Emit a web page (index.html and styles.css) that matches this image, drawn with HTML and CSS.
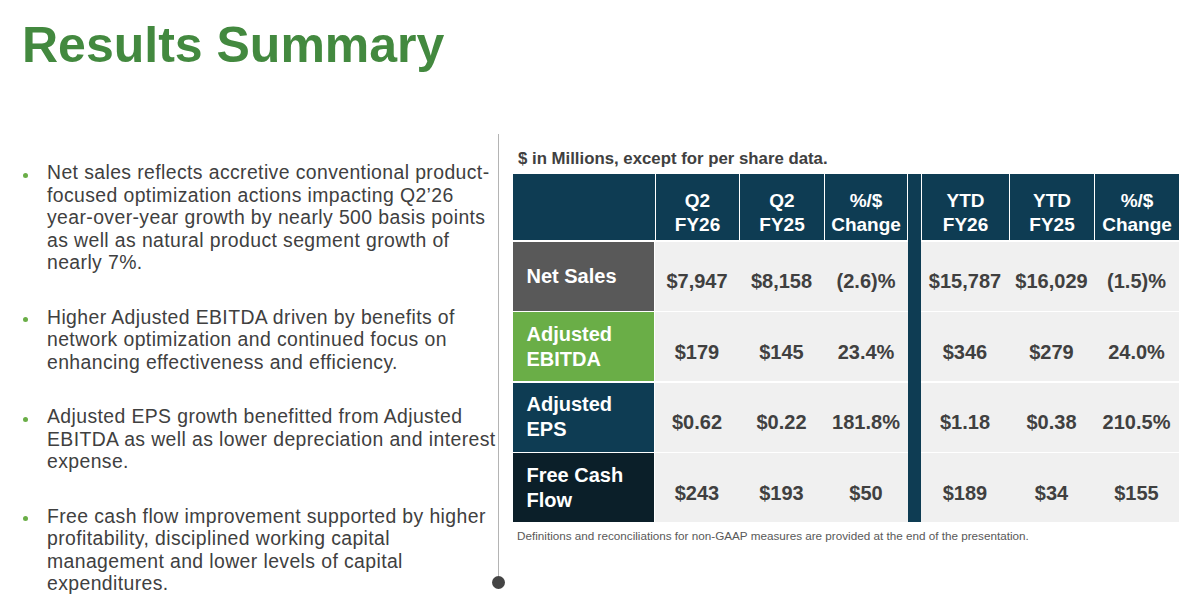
FILE: index.html
```html
<!DOCTYPE html>
<html lang="en">
<head>
<meta charset="utf-8">
<title>Results Summary</title>
<link rel="stylesheet" href="styles.css">
</head>
<body>
<div class="slide">
  <h1 class="title">Results Summary</h1>
  <div class="main">
    <ul class="points">
      <li class="point"><span class="dot"></span><p>Net sales reflects accretive conventional product-<br>focused optimization actions impacting Q2’26<br>year-over-year growth by nearly 500 basis points<br>as well as natural product segment growth of<br>nearly 7%.</p></li>
      <li class="point"><span class="dot"></span><p>Higher Adjusted EBITDA driven by benefits of<br>network optimization and continued focus on<br>enhancing effectiveness and efficiency.</p></li>
      <li class="point"><span class="dot"></span><p>Adjusted EPS growth benefitted from Adjusted<br>EBITDA as well as lower depreciation and interest<br>expense.</p></li>
      <li class="point"><span class="dot"></span><p>Free cash flow improvement supported by higher<br>profitability, disciplined working capital<br>management and lower levels of capital<br>expenditures.</p></li>
    </ul>
    <div class="divider"><span class="rule"></span><span class="knob"></span></div>
    <section class="results">
      <p class="caption">$ in Millions, except for per share data.</p>
      <div class="table">
        <div class="hd corner"></div>
        <div class="hd">Q2<br>FY26</div>
        <div class="hd">Q2<br>FY25</div>
        <div class="hd before-sep">%/$<br>Change</div>
        <div class="sep"></div>
        <div class="hd">YTD<br>FY26</div>
        <div class="hd">YTD<br>FY25</div>
        <div class="hd">%/$<br>Change</div>

        <div class="label net">Net Sales</div>
        <div class="val">$7,947</div>
        <div class="val">$8,158</div>
        <div class="val">(2.6)%</div>
        <div class="val">$15,787</div>
        <div class="val">$16,029</div>
        <div class="val">(1.5)%</div>

        <div class="label ebitda">Adjusted<br>EBITDA</div>
        <div class="val">$179</div>
        <div class="val">$145</div>
        <div class="val">23.4%</div>
        <div class="val">$346</div>
        <div class="val">$279</div>
        <div class="val">24.0%</div>

        <div class="label eps">Adjusted<br>EPS</div>
        <div class="val">$0.62</div>
        <div class="val">$0.22</div>
        <div class="val">181.8%</div>
        <div class="val">$1.18</div>
        <div class="val">$0.38</div>
        <div class="val">210.5%</div>

        <div class="label fcf">Free Cash<br>Flow</div>
        <div class="val">$243</div>
        <div class="val">$193</div>
        <div class="val">$50</div>
        <div class="val">$189</div>
        <div class="val">$34</div>
        <div class="val">$155</div>
      </div>
      <p class="footnote">Definitions and reconciliations for non-GAAP measures are provided at the end of the presentation.</p>
    </section>
  </div>
</div>
</body>
</html>
```

FILE: styles.css
```css
* { box-sizing: border-box; }
html, body { margin: 0; padding: 0; background: #fff; }
body { font-family: "Liberation Sans", Arial, sans-serif; }

.slide { width: 1200px; height: 615px; overflow: hidden; }

.title {
  margin: 0;
  padding: 15px 0 0 22px;
  font-size: 50px;
  line-height: 60px;
  font-weight: 700;
  color: #43893f;
}

.main { display: flex; align-items: flex-start; margin-top: 59px; }

.points {
  list-style: none;
  margin: 0;
  padding: 27px 0 0 22.5px;
  width: 492px;
  flex: none;
}
.point { display: flex; align-items: flex-start; }
.point + .point { margin-top: 32px; }
.dot {
  flex: none;
  width: 5px;
  height: 5px;
  border-radius: 50%;
  background: #6aae47;
  margin: 11.5px 19.5px 0 0;
}
.point p {
  margin: 0;
  font-family: "Liberation Sans", Arial, sans-serif;
  font-size: 19.4px;
  line-height: 22.5px;
  letter-spacing: 0.4px;
  color: #404040;
  white-space: nowrap;
}

.divider {
  flex: none;
  width: 13px;
  height: 455px;
  display: flex;
  flex-direction: column;
  align-items: center;
}
.rule { flex: 1; width: 1.5px; background: #b4b4b4; }
.knob { flex: none; width: 13px; height: 13px; border-radius: 50%; background: #444; }

.results { flex: none; width: 674px; padding: 15px 0 0 8px; }

.caption {
  margin: 0 0 5px;
  padding-left: 5px;
  font-size: 16.8px;
  line-height: 20px;
  font-weight: 700;
  color: #404040;
}

.table {
  display: grid;
  grid-template-columns: 142px 84px 85px 84px 13px 88px 85px 85px;
  grid-template-rows: 66px repeat(4, 69px);
  row-gap: 1.5px;
  background: #fff;
}

.hd {
  background: #0e3c53;
  color: #fff;
  font-size: 19px;
  line-height: 24.5px;
  font-weight: 700;
  text-align: center;
  display: flex;
  flex-direction: column;
  justify-content: flex-end;
  align-items: center;
  padding-bottom: 2.5px;
  border-left: 1.5px solid #fff;
}
.hd.corner { border-left: 0; }
.hd.before-sep { border-right: 1.5px solid #fff; }

.sep { grid-column: 5; grid-row: 1 / 6; background: #0e3c53; }

.label {
  display: flex;
  align-items: center;
  padding-left: 13.5px;
  color: #fff;
  font-size: 20px;
  line-height: 25px;
  font-weight: 700;
  border-right: 1px solid #fff;
}
.label.net { background: #595959; }
.label.ebitda { background: #6aae47; }
.label.eps { background: #0e3c53; }
.label.fcf { background: #0b1f29; }

.val {
  display: flex;
  align-items: center;
  justify-content: center;
  padding-top: 11px;
  background: #f0f0f0;
  color: #404040;
  font-size: 20px;
  font-weight: 700;
  white-space: nowrap;
}

.footnote {
  margin: 7px 0 0;
  padding-left: 4px;
  font-size: 11.7px;
  line-height: 13px;
  color: #595959;
}
```
